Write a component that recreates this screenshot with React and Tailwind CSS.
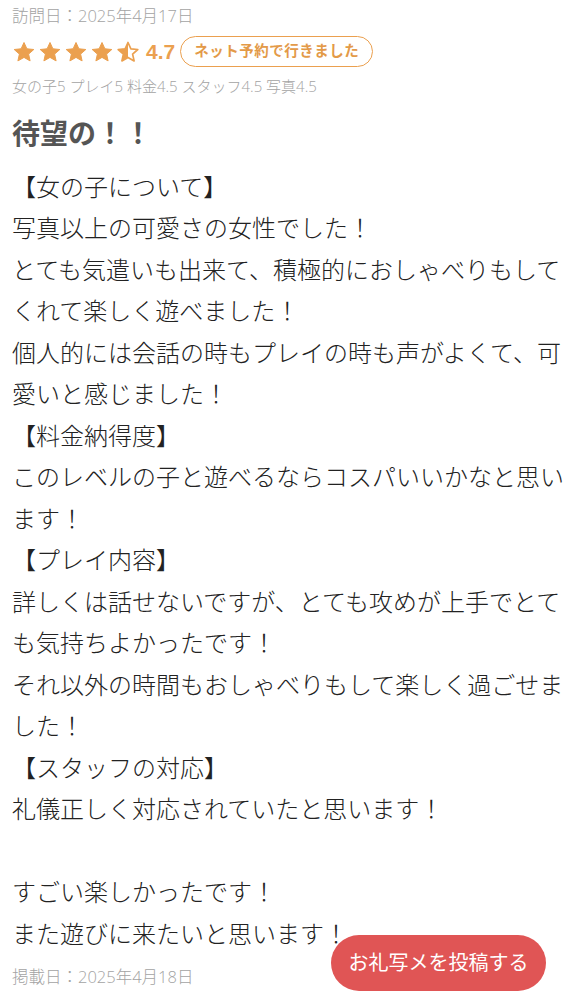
import React from 'react';

const STAR = 'M12 2.5l2.9 6.3 6.9.7-5.2 4.6 1.5 6.8L12 17.4l-6.1 3.5 1.5-6.8-5.2-4.6 6.9-.7z';

const Star = ({ half }) => (
  <svg width="24" height="24" viewBox="0 0 24 24" className="shrink-0">
    <defs>
      <clipPath id="halfclip">
        <rect x="0" y="0" width="12" height="24" />
      </clipPath>
    </defs>
    {half ? (
      <>
        <path d={STAR} fill="none" stroke="#eba04f" strokeWidth="1.7" strokeLinejoin="round" />
        <path d={STAR} fill="#eba04f" clipPath="url(#halfclip)" />
      </>
    ) : (
      <path d={STAR} fill="#eba04f" stroke="#eba04f" strokeWidth="1" strokeLinejoin="round" />
    )}
  </svg>
);

const body = `【女の子について】
写真以上の可愛さの女性でした！
とても気遣いも出来て、積極的におしゃべりもしてくれて楽しく遊べました！
個人的には会話の時もプレイの時も声がよくて、可愛いと感じました！
【料金納得度】
このレベルの子と遊べるならコスパいいかなと思います！
【プレイ内容】
詳しくは話せないですが、とても攻めが上手でとても気持ちよかったです！
それ以外の時間もおしゃべりもして楽しく過ごせました！
【スタッフの対応】
礼儀正しく対応されていたと思います！

すごい楽しかったです！
また遊びに来たいと思います！`;

const gray = { fontFamily: '"Open Sans", "Noto Sans CJK JP", sans-serif' };

export default function App() {
  return (
    <div
      className="relative w-[576px] min-h-[992px] bg-white px-[12px]"
      style={{ fontFamily: '"Liberation Sans", "Noto Sans CJK JP", sans-serif' }}
    >
      <div className="pt-[5px] text-[16.5px] font-light leading-[22px] text-[#a3a3a3]" style={gray}>
        訪問日：2025年4月17日
      </div>

      <div className="mt-[9px] flex items-center">
        <div className="flex gap-[2px]">
          <Star />
          <Star />
          <Star />
          <Star />
          <Star half />
        </div>
        <span className="ml-[6px] text-[21px] font-bold text-[#eba04f]">4.7</span>
        <span className="ml-[5px] flex h-[31px] items-center rounded-full border-[1.5px] border-[#eba04f] px-[13px] text-[14.5px] font-bold tracking-[0.5px] text-[#e39a48]">
          ネット予約で行きました
        </span>
      </div>

      <div className="mt-[8px] text-[15px] font-light leading-[20px] text-[#a3a3a3]" style={gray}>
        女の子5 プレイ5 料金4.5 スタッフ4.5 写真4.5
      </div>

      <h1 className="mt-[19px] text-[28px] font-bold leading-[40px] text-[#555555]">
        待望の！！
      </h1>

      <div className="mt-[12px] whitespace-pre-wrap text-[24px] font-light leading-[41.5px] text-[#222222]">
        {body}
      </div>

      <div className="mt-[11px] pb-[4px] text-[16.5px] font-light leading-[22px] text-[#a3a3a3]" style={gray}>
        掲載日：2025年4月18日
      </div>

      <button className="fixed right-[30px] top-[935px] flex h-[56px] w-[215px] items-center justify-center rounded-full bg-[#e05555] text-[20px] text-white">
        お礼写メを投稿する
      </button>
    </div>
  );
}
